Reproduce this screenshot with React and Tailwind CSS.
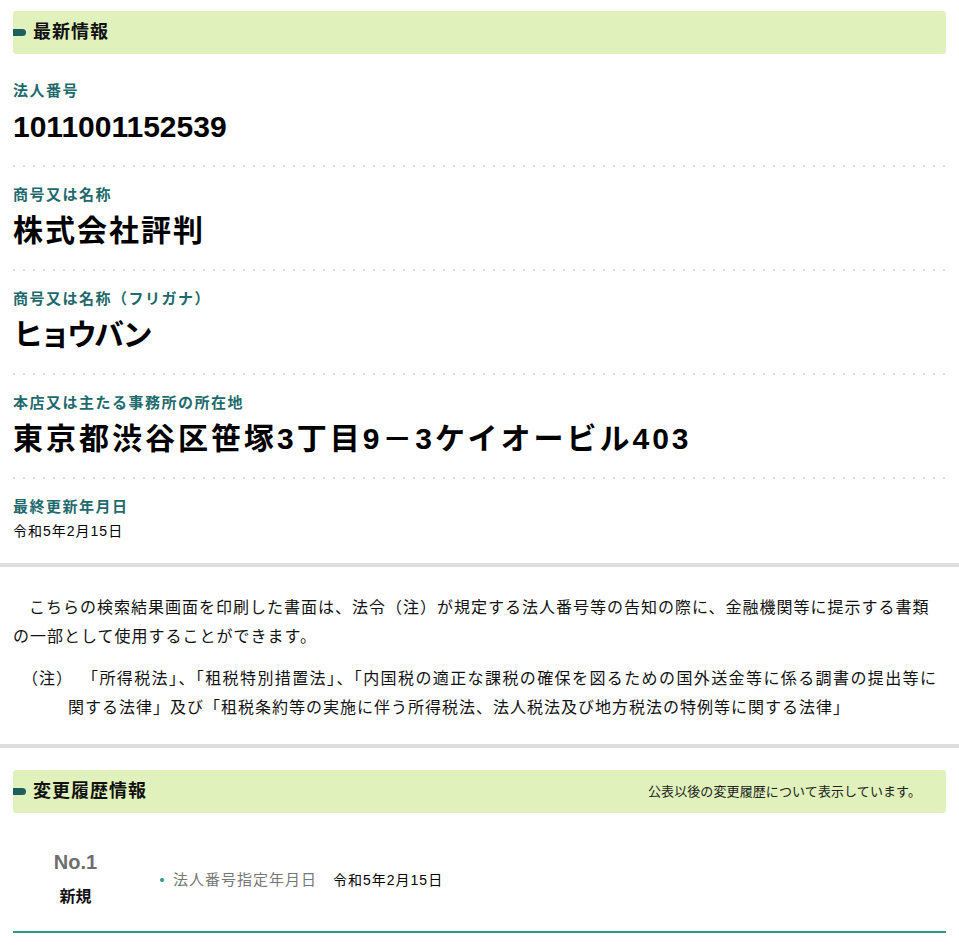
import React from "react";

const FONT = "font-['Liberation_Sans','Noto_Sans_CJK_JP',sans-serif]";

const SectionHeader = ({ title, note }) => (
  <div className="mx-[13px] h-[43px] bg-[#e0f1bc] rounded-[3px] flex items-center justify-between pr-[25px]">
    <div className="flex items-center">
      <span className="w-[13px] h-[7px] bg-[#1c5f5c] rounded-r-full" />
      <span className="ml-[7px] text-[18px] font-bold text-[#111] tracking-[1px]">{title}</span>
    </div>
    {note && <span className="text-[13px] text-[#222] tracking-[0.1px]">{note}</span>}
  </div>
);

const Dotted = () => (
  <div className="h-[2px] mx-[13px] bg-[linear-gradient(to_right,#d9d9d9_2px,transparent_2px)] bg-[length:10px_2px]" />
);

const Label = ({ children }) => (
  <div className="text-[15px] font-semibold text-[#1e6a6c] leading-[20px] tracking-[1.5px]">{children}</div>
);

const fields = [
  { label: "法人番号", value: "1011001152539", cls: "tracking-[0px]" },
  { label: "商号又は名称", value: "株式会社評判", cls: "tracking-[2px]" },
  { label: "商号又は名称（フリガナ）", value: "ヒョウバン", cls: "tracking-[-3px]" },
  { label: "本店又は主たる事務所の所在地", value: "東京都渋谷区笹塚3丁目9－3ケイオービル403", cls: "tracking-[3px]" },
];

export default function App() {
  return (
    <div className={`${FONT} w-[959px] bg-white pt-[11px] text-black`}>
      <SectionHeader title="最新情報" />
      <div className="pt-[27px]">
        {fields.map((f) => (
          <div key={f.label}>
            <div className="px-[13px]">
              <Label>{f.label}</Label>
              <div className={`mt-[9px] text-[30px] font-bold leading-[34px] whitespace-nowrap ${f.cls}`}>{f.value}</div>
            </div>
            <div className="h-[21px]" />
            <Dotted />
            <div className="h-[18px]" />
          </div>
        ))}
        <div className="px-[13px]">
          <Label>最終更新年月日</Label>
          <div className="mt-[4px] text-[14px] leading-[20px] tracking-[1px]">令和5年2月15日</div>
        </div>
      </div>

      <div className="mt-[22px] h-[4px] bg-[#dedede]" />

      <div className="pt-[26px] pb-[22px] text-[16px] leading-[29px] tracking-[1px] text-[#111] whitespace-nowrap">
        <p className="pl-[29px]">
          こちらの検索結果画面を印刷した書面は、法令（注）が規定する法人番号等の告知の際に、金融機関等に提示する書類
        </p>
        <p className="pl-[13px]">の一部として使用することができます。</p>
        <div className="mt-[13px] flex pl-[22px]">
          <span className="w-[60px] shrink-0">（注）</span>
          <span className="tracking-[1.4px]">「所得税法」、「租税特別措置法」、「内国税の適正な課税の確保を図るための国外送金等に係る調書の提出等に</span>
        </div>
        <p className="pl-[68px]">
          関する法律」及び「租税条約等の実施に伴う所得税法、法人税法及び地方税法の特例等に関する法律」
        </p>
      </div>

      <div className="h-[4px] bg-[#dedede]" />

      <div className="pt-[22px]">
        <SectionHeader title="変更履歴情報" note="公表以後の変更履歴について表示しています。" />
        <div className="mx-[13px] flex items-center pt-[36px] pb-[24px] border-b-2 border-[#2a9a80]">
          <div className="w-[125px] flex flex-col items-center">
            <span className="text-[20px] font-bold text-[#6e6e6e] leading-[26px]">No.1</span>
            <span className="mt-[12px] text-[16px] font-bold text-[#111] leading-[20px]">新規</span>
          </div>
          <div className="ml-[22px] flex items-center text-[15px] mt-[4px]">
            <span className="w-[4px] h-[4px] rounded-full bg-[#2a9a80] mr-[9px]" />
            <span className="text-[#777] tracking-[1px]">法人番号指定年月日</span>
            <span className="ml-[16px] text-[14px] text-black tracking-[1px]">令和5年2月15日</span>
          </div>
        </div>
      </div>
    </div>
  );
}
